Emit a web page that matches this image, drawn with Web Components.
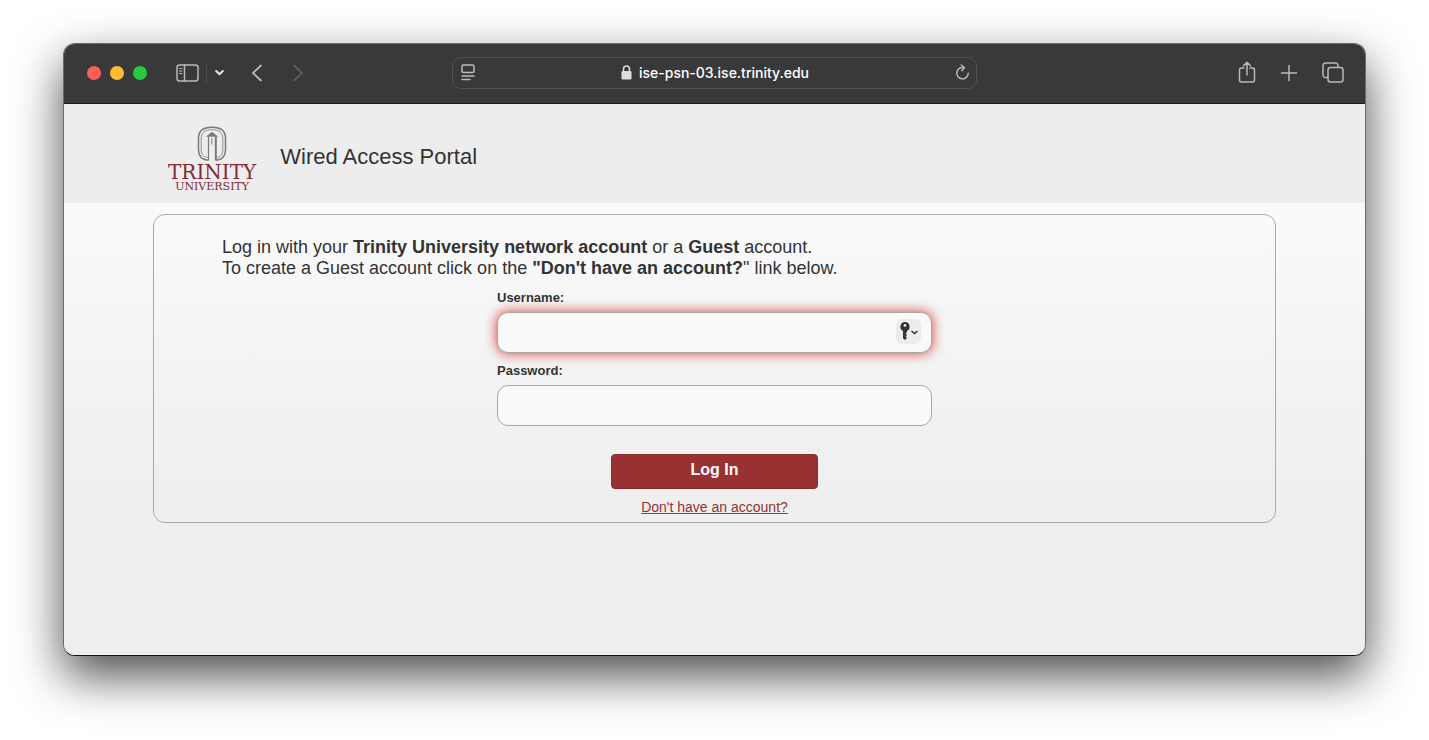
<!DOCTYPE html>
<html lang="en">
<head>
<meta charset="utf-8">
<meta name="viewport" content="width=device-width, initial-scale=1">
<title>Wired Access Portal</title>
<style>
  body {
    margin: 0;
    min-height: 100vh;
    box-sizing: border-box;
    display: flex;
    padding: 43px 63px 84px;
    background: #fff;
    color: #333;
    font-family: "Liberation Sans", Arial, sans-serif;
  }

  browser-window {
    flex: 1;
    min-width: 0;
  }
</style>
</head>
<body>
<browser-window>
  <browser-toolbar slot="toolbar" address="ise-psn-03.ise.trinity.edu"></browser-toolbar>
  <portal-banner>Wired Access Portal</portal-banner>
  <portal-login>
    Log in with your <b>Trinity University network account</b> or a <b>Guest</b> account.<br>
    To create a Guest account click on the <b>"Don't have an account?</b>" link below.
  </portal-login>
</browser-window>

<script>
const define = (tagName, html, setup) => {
  const template = document.createElement("template");
  template.innerHTML = html;

  customElements.define(tagName, class extends HTMLElement {
    constructor() {
      super();
      this.attachShadow({ mode: "open" }).append(template.content.cloneNode(true));
    }

    connectedCallback() {
      setup?.(this);
    }
  });
};

define("browser-window", `
  <style>
    :host {
      display: flex;
      flex-direction: column;
      box-sizing: border-box;
      overflow: hidden;
      border: 1px solid #6b6b6b;
      border-bottom-color: #111;
      border-radius: 12px;
      background: #ededed;
      box-shadow: 0 20px 48px rgba(0, 0, 0, 0.7);
    }

    main {
      flex: 1;
      display: flex;
      flex-direction: column;
      background: linear-gradient(#fafafa 100px, #f0f1f1 320px, #eeeeee 430px);
    }
  </style>
  <slot name="toolbar"></slot>
  <main><slot></slot></main>
`);

define("browser-toolbar", `
  <style>
    :host {
      display: grid;
      grid-template-columns: 1fr minmax(200px, 525px) 1fr;
      align-items: center;
      box-sizing: border-box;
      height: 60px;
      padding: 0 21px 2px;
      border-bottom: 1px solid #1c1c1d;
      background: #39393a;
      color: #b9b9ba;
    }

    button {
      display: flex;
      padding: 0;
      border: 0;
      background: none;
      color: inherit;
    }

    svg {
      display: block;
      fill: none;
      stroke: currentColor;
      stroke-width: 1.5;
      stroke-linecap: round;
      stroke-linejoin: round;
    }

    .start,
    .lights,
    .end {
      display: flex;
      align-items: center;
    }

    .lights {
      gap: 9px;
      margin: 0 29px 0 2px;
    }

    .light {
      width: 14px;
      height: 14px;
      border-radius: 50%;
      background: var(--light);
    }

    .divider {
      width: 1px;
      height: 20px;
      margin: 0 8px 0 7px;
      background: #4c4c4d;
    }

    .chevron {
      color: #e8e8e8;
    }

    .back {
      margin-left: 27px;
    }

    .forward {
      margin-left: 29px;
      color: #626263;
    }

    .address {
      display: flex;
      align-items: center;
      box-sizing: border-box;
      height: 32px;
      padding: 0 6px 0 8px;
      border: 1px solid #515152;
      border-radius: 9px;
    }

    .location {
      flex: 1;
      display: flex;
      align-items: center;
      justify-content: center;
      gap: 7px;
      color: #fff;
      font: 500 14px/20px Inter, sans-serif;
    }

    .location svg {
      color: #dedede;
    }

    .end {
      justify-content: flex-end;
      gap: 24px;
    }
  </style>
  <div class="start">
    <div class="lights">
      <button class="light" style="--light: #ff5f57" aria-label="Close"></button>
      <button class="light" style="--light: #febc2e" aria-label="Minimize"></button>
      <button class="light" style="--light: #28c840" aria-label="Zoom"></button>
    </div>
    <button aria-label="Sidebar">
      <svg width="23" height="18" viewBox="0 0 23 18"><rect x="1" y="1" width="21" height="16" rx="2.5"/><path d="M8.5 1v16"/><path d="M3.5 4.5h2.5M3.5 7h2.5M3.5 9.500h2.500" stroke-width="1"/></svg>
    </button>
    <span class="divider"></span>
    <button class="chevron" aria-label="Tab groups">
      <svg width="9" height="7" viewBox="0 0 9 7"><path d="M1.200 2l3.300 3.200L7.800 2" style="stroke-width: 2"/></svg>
    </button>
    <button class="back" aria-label="Back">
      <svg width="12" height="18" viewBox="0 0 12 18"><path d="M10 1.500L2 9l8 7.500" stroke-width="1.800"/></svg>
    </button>
    <button class="forward" aria-label="Forward">
      <svg width="12" height="18" viewBox="0 0 12 18"><path d="M2 1.500L10 9l-8 7.500" stroke-width="1.700"/></svg>
    </button>
  </div>
  <div class="address">
    <button aria-label="Page menu">
      <svg width="14" height="17" viewBox="0 0 14 17"><rect x="1" y="1" width="12" height="7.500" rx="1.500"/><path d="M1 12h12M1 15.500h8"/></svg>
    </button>
    <div class="location">
      <svg width="11" height="15" viewBox="0 0 11 15"><rect x=".5" y="6" width="10" height="8.500" rx="1.200" fill="currentColor" stroke="none"/><path d="M2.500 6.500V4a3 3 0 0 1 6 0v2.500"/></svg>
      <span class="url"></span>
    </div>
    <button aria-label="Reload">
      <svg width="15" height="17" viewBox="0 0 15 17"><path d="M8.700 3.600A5.700 5.700 0 1 0 13.200 9.300M6.300 1l3.200 2.800L6.700 6.800"/></svg>
    </button>
  </div>
  <div class="end">
    <button aria-label="Share">
      <svg width="18" height="23" viewBox="0 0 18 23"><path d="M6 7H3.500A2 2 0 0 0 1.500 9v10a2 2 0 0 0 2 2h11a2 2 0 0 0 2-2V9a2 2 0 0 0-2-2H12M9 14V1.500M5.500 4.800L9 1.300l3.500 3.500"/></svg>
    </button>
    <button aria-label="New tab">
      <svg width="18" height="18" viewBox="0 0 18 18"><path d="M9 1.500v15M1.500 9h15"/></svg>
    </button>
    <button aria-label="Tab overview">
      <svg width="22" height="21" viewBox="0 0 22 21"><rect x="6" y="5.500" width="15" height="14.500" rx="2.500"/><path d="M6 15.500H3.500A2.500 2.500 0 0 1 1 13V3.500A2.500 2.500 0 0 1 3.500 1h10A2.500 2.500 0 0 1 16 3.500v2"/></svg>
    </button>
  </div>
`, (host) => {
  host.shadowRoot.querySelector(".url").textContent = host.getAttribute("address");
});

define("portal-banner", `
  <style>
    :host {
      display: block;
      background: #ededed;
    }

    header {
      display: flex;
      align-items: center;
      gap: 24px;
      box-sizing: border-box;
      height: 99px;
      padding: 0 104px;
    }

    h1 {
      margin: 0 0 -6px;
      font-size: 22px;
      font-weight: 400;
      line-height: 26px;
    }
  </style>
  <header>
    <trinity-logo></trinity-logo>
    <h1><slot></slot></h1>
  </header>
`);

define("trinity-logo", `
  <style>
    :host {
      display: flex;
      flex-direction: column;
      align-items: center;
      padding-top: 10px;
      color: #862a30;
      font-family: "DejaVu Serif", serif;
    }

    .name {
      font-size: 20px;
      line-height: 20px;
    }

    .kind {
      font-size: 11px;
      line-height: 10px;
    }
  </style>
  <svg width="30" height="36" viewBox="0 0 30 36" fill="none" stroke="#77797b" aria-hidden="true">
    <path d="M11 34.200C4 33.500 1.500 29 1.500 24V12C1.500 5 6 1.200 15 1.200S28.500 5 28.500 12v12c0 5-2.500 9.500-9.500 10.200" stroke-width="1.500"/>
    <path d="M11 31.500C6 31 4.200 28 4.200 24V12C4.200 6.500 8 3.700 15 3.700s10.800 2.800 10.800 8.300v12c0 4-1.800 7-6.800 7.500" stroke-width=".8"/>
    <path d="M9.500 10.500L15 6l5.500 4.500z" fill="#77797b" stroke-width=".5"/>
    <path d="M11.500 10.500V34.500" stroke-width="1.200"/>
    <path d="M18.800 10.500V34.500" stroke-width="2"/>
    <path d="M14.800 12v6.500" stroke-width="1"/>
  </svg>
  <span class="name">TRINITY</span>
  <span class="kind">UNIVERSITY</span>
`);

define("portal-login", `
  <style>
    :host {
      display: block;
      padding: 11px 89px;
    }

    form {
      display: flex;
      flex-direction: column;
      align-items: center;
      padding: 22px 68px 7px;
      border: 1px solid #a9a9a9;
      border-radius: 12px;
    }

    p {
      align-self: stretch;
      margin: 0 0 11px;
      font-size: 18px;
      line-height: 21px;
    }

    .field {
      display: flex;
      flex-direction: column;
      gap: 6px;
      width: 100%;
      max-width: 435px;
      margin-bottom: 10px;
    }

    label {
      font-size: 13px;
      font-weight: 700;
      line-height: 16px;
    }

    .control {
      display: flex;
      align-items: center;
      box-sizing: border-box;
      height: 41px;
      padding-right: 10px;
      border: 1px solid #a9a9a9;
      border-radius: 11px;
      background: #f9f9f9;
    }

    .control.active {
      box-shadow: 0 0 12px 1px #dc5050;
    }

    input {
      flex: 1;
      align-self: stretch;
      min-width: 0;
      padding: 0 10px;
      border: 0;
      outline: 0;
      background: none;
      color: inherit;
      font: inherit;
    }

    .key {
      display: flex;
      align-items: center;
      justify-content: center;
      width: 25px;
      height: 25px;
      margin-bottom: 3px;
      padding: 0;
      border: 0;
      border-radius: 6px;
      background: #ececec;
      color: #333;
    }

    .submit {
      width: 207px;
      height: 35px;
      margin: 18px 0 10px;
      padding: 0 0 3px;
      border: 1px solid #8c2b2e;
      border-radius: 4px;
      background: #993132;
      color: #fff;
      font: 700 16px/20px "Liberation Sans", Arial, sans-serif;
    }

    a {
      color: #993132;
      font-size: 14px;
      line-height: 16px;
    }
  </style>
  <form>
    <p><slot></slot></p>
    <div class="field">
      <label for="username">Username:</label>
      <div class="control active">
        <input id="username" type="text">
        <button class="key" type="button" aria-label="Saved passwords">
          <svg width="19" height="18" viewBox="0 0 19 18" fill="currentColor" aria-hidden="true">
            <path d="M6 0a4.700 4.700 0 0 0-2 8.900v7.300L6 18l2-2-1.300-1.600L8 13l-1.300-1.500L8 10V8.900A4.700 4.700 0 0 0 6 0zm0 2a1.400 1.400 0 1 1 0 2.800A1.400 1.400 0 0 1 6 2z"/>
            <path d="M12.500 9l3 2.600 3-2.600" fill="none" stroke="currentColor" stroke-width="1.500"/>
          </svg>
        </button>
      </div>
    </div>
    <div class="field">
      <label for="password">Password:</label>
      <div class="control"><input id="password" type="password"></div>
    </div>
    <button class="submit" type="button">Log In</button>
    <a href="#">Don't have an account?</a>
  </form>
`);
</script>
</body>
</html>
